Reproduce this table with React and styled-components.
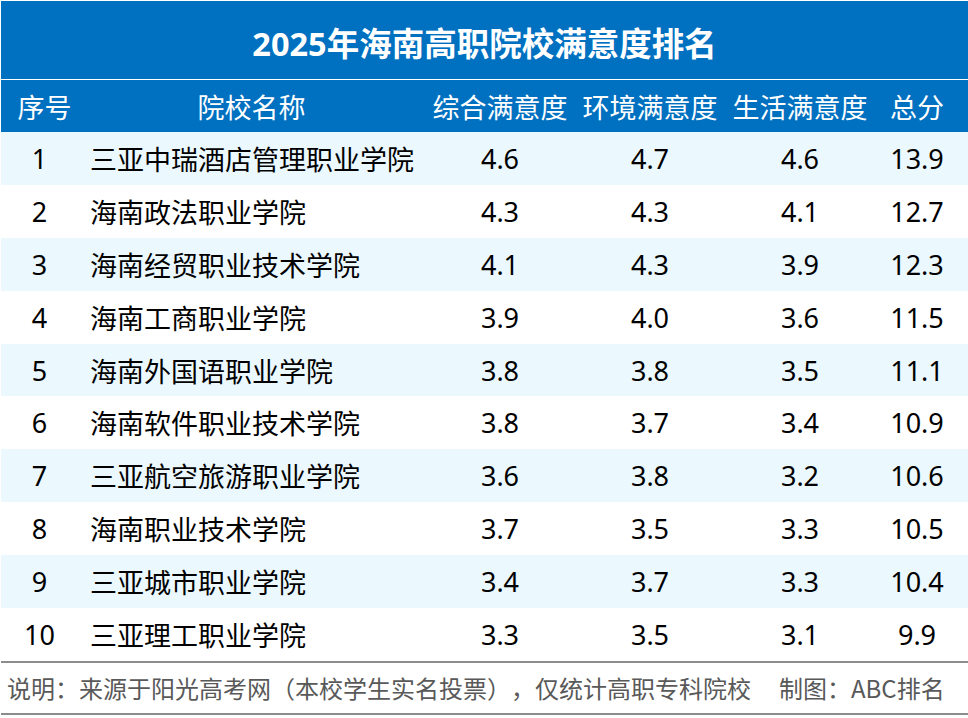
import React from "react";
import styled, { createGlobalStyle } from "styled-components";

const rows = [
  [1, "三亚中瑞酒店管理职业学院", "4.6", "4.7", "4.6", "13.9"],
  [2, "海南政法职业学院", "4.3", "4.3", "4.1", "12.7"],
  [3, "海南经贸职业技术学院", "4.1", "4.3", "3.9", "12.3"],
  [4, "海南工商职业学院", "3.9", "4.0", "3.6", "11.5"],
  [5, "海南外国语职业学院", "3.8", "3.8", "3.5", "11.1"],
  [6, "海南软件职业技术学院", "3.8", "3.7", "3.4", "10.9"],
  [7, "三亚航空旅游职业学院", "3.6", "3.8", "3.2", "10.6"],
  [8, "海南职业技术学院", "3.7", "3.5", "3.3", "10.5"],
  [9, "三亚城市职业学院", "3.4", "3.7", "3.3", "10.4"],
  [10, "三亚理工职业学院", "3.3", "3.5", "3.1", "9.9"],
];

const headers = ["序号", "院校名称", "综合满意度", "环境满意度", "生活满意度", "总分"];

const App = () => {
  return (
    <>
      <GlobalStyle />
      <Page>
        <Title>2025年海南高职院校满意度排名</Title>
        <Table>
          <HeadRow>
            {headers.map((h, i) => (
              <HeadCell key={h} $first={i === 0}>
                {h}
              </HeadCell>
            ))}
          </HeadRow>
          {rows.map((r, idx) => (
            <Row key={r[0]} $striped={idx % 2 === 0}>
              <Cell>{r[0]}</Cell>
              <NameCell>{r[1]}</NameCell>
              <Cell>{r[2]}</Cell>
              <Cell>{r[3]}</Cell>
              <Cell>{r[4]}</Cell>
              <Cell>{r[5]}</Cell>
            </Row>
          ))}
        </Table>
        <Footer>
          说明：来源于阳光高考网（本校学生实名投票），仅统计高职专科院校
          <Credit>制图：ABC排名</Credit>
        </Footer>
      </Page>
    </>
  );
};

const GlobalStyle = createGlobalStyle`
  body {
    margin: 0;
    background: #ffffff;
    font-family: "Noto Sans", "Noto Sans CJK SC", sans-serif;
  }
`;

const Page = styled.div`
  width: 968px;
  height: 718px;
  padding: 1px 0 0 1px;
  box-sizing: border-box;
  background: #ffffff;
`;

const Title = styled.div`
  height: 79px;
  padding-top: 3px;
  box-sizing: border-box;
  display: flex;
  align-items: center;
  justify-content: center;
  background: #0070c0;
  color: #ffffff;
  font-size: 32.5px;
  font-weight: 700;
  border-bottom: 1px solid #ffffff;
`;

const Table = styled.div`
  display: flex;
  flex-direction: column;
`;

const columns = "77px 347px 150px 150px 150px 84px";

const HeadRow = styled.div`
  display: grid;
  grid-template-columns: ${columns};
  height: 52px;
  background: #0070c0;
  color: #ffffff;
  font-size: 27px;
`;

const HeadCell = styled.div`
  display: flex;
  align-items: center;
  justify-content: center;
  padding-left: ${(p) => (p.$first ? "10px" : "0")};
  white-space: nowrap;
`;

const Row = styled.div`
  display: grid;
  grid-template-columns: ${columns};
  height: 52.9px;
  background: ${(p) => (p.$striped ? "#ebf8fe" : "#ffffff")};
  color: #000000;
  font-size: 27px;
`;

const Cell = styled.div`
  display: flex;
  align-items: center;
  justify-content: center;
  white-space: nowrap;
`;

const NameCell = styled(Cell)`
  justify-content: flex-start;
  padding-left: 12px;
`;

const Footer = styled.div`
  height: 54px;
  box-sizing: border-box;
  display: flex;
  align-items: center;
  padding-left: 6px;
  border-top: 2px solid #8c8c8c;
  border-bottom: 2px solid #8c8c8c;
  color: #595959;
  font-family: "Noto Sans CJK SC", sans-serif;
  font-size: 24px;
  text-spacing-trim: space-all;
  white-space: nowrap;
`;

const Credit = styled.span`
  margin-left: 28px;
`;

export default App;
